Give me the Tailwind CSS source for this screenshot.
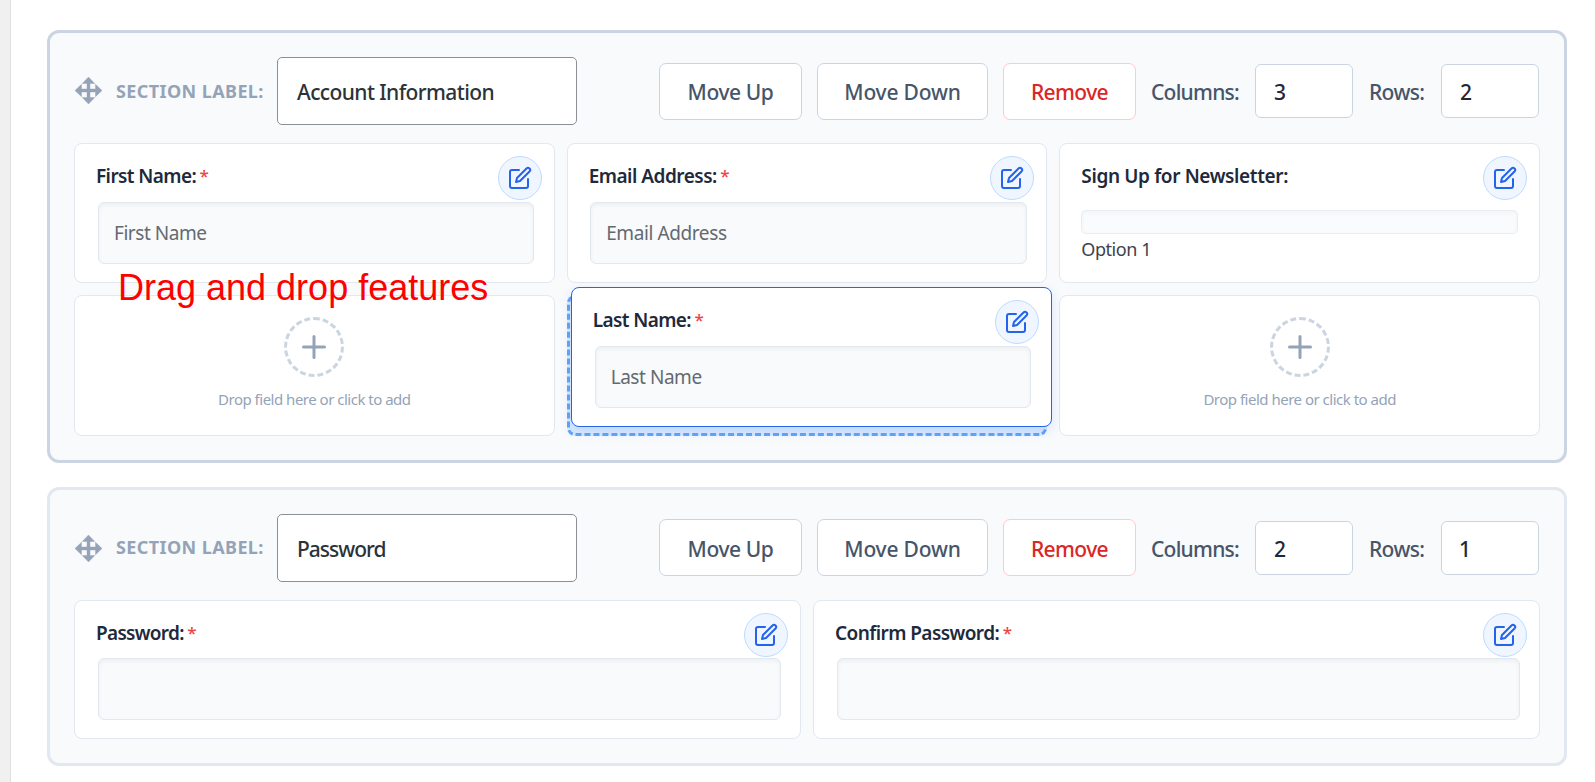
<!DOCTYPE html>
<html lang="en">
<head>
<meta charset="utf-8">
<title>Form builder</title>
<script src="https://cdn.jsdelivr.net/npm/@tailwindcss/browser@4"></script>
</head>
<body class="relative h-[782px] overflow-hidden bg-[#f0f0f1] font-['Noto_Sans','Open_Sans',sans-serif] text-[21px] font-medium text-[#1e293b]">
<svg class="hidden">
  <symbol id="edit" viewBox="0 0 24 24" fill="none" stroke="currentColor" stroke-width="2" stroke-linecap="round" stroke-linejoin="round"><path d="M11 4H4a2 2 0 0 0-2 2v14a2 2 0 0 0 2 2h14a2 2 0 0 0 2-2v-7"/><path d="M18.5 2.5a2.121 2.121 0 0 1 3 3L12 15l-4 1 1-4 9.5-9.5z"/></symbol>
  <symbol id="move" viewBox="0 0 27 27" fill="currentColor"><path d="M13.500 0L19.700 6.500H15V12H20.500V7.300L27 13.500L20.500 19.700V15H15V20.500H19.700L13.500 27L7.300 20.500H12V15H6.500V19.700L0 13.500L6.500 7.300V12H12V6.500H7.300Z" stroke="currentColor" stroke-width="0.400"/></symbol>
  <symbol id="plus" viewBox="0 0 24 24" fill="none" stroke="currentColor" stroke-width="3" stroke-linecap="round"><path d="M12 1.500V22.500M1.500 12H22.500"/></symbol>
</svg>

<main class="ml-[10px] flex h-full flex-col gap-6 border-l border-[#dedfe1] bg-white pt-[30px] pr-[28px] pl-[36px]">

  <section class="h-[433px] shrink-0 rounded-xl border-3 border-[#cbd5e1] bg-[#f8fafc] p-6">
    <header class="mb-[18px] flex h-[68px] items-center">
      <svg class="mb-px ml-[1px] h-[27px] w-[27px] text-[#94a3b8]"><use href="#move"/></svg>
      <span class="ml-[14px] w-[161px] text-[18px] font-bold tracking-[0.400px] whitespace-nowrap text-[#94a3b8]">SECTION LABEL:</span>
      <div class="flex h-[68px] w-[300px] items-center rounded-[5px] border border-[#8c8f94] bg-white pt-1 pl-[19px] tracking-[-0.600px] text-[#2c3338]">Account Information</div>
      <div class="mr-px ml-auto flex items-center gap-[15px] text-[#475569]">
        <button class="h-[57px] w-[143px] rounded-[7px] border border-[#cbd5e1] bg-white pt-1 font-medium tracking-[-0.4px]">Move Up</button>
        <button class="h-[57px] w-[171px] rounded-[7px] border border-[#cbd5e1] bg-white pt-1 font-medium tracking-[-0.2px]">Move Down</button>
        <button class="h-[57px] w-[133px] rounded-[7px] border border-[#fecaca] bg-white pt-1 font-medium tracking-[-0.6px] text-[#dc2626]">Remove</button>
        <label class="flex items-center"><span class="w-[104px] pt-1 tracking-[-0.75px]">Columns:</span><span class="flex h-[54px] w-[98px] items-center rounded-[6px] border border-[#cbd5e1] bg-white pt-1 pl-[18px] text-[#1e293b]">3</span></label>
        <label class="flex items-center"><span class="w-[73px] pt-1 pl-[1px] tracking-[-0.65px]">Rows:</span><span class="flex h-[54px] w-[98px] items-center rounded-[6px] border border-[#cbd5e1] bg-white pt-1 pl-[18px] text-[#1e293b]">2</span></label>
      </div>
    </header>

    <div class="grid grid-cols-3 grid-rows-[140px_141px] gap-3">
      <div class="relative rounded-lg border border-[#e2e8f0] bg-white px-[21px] pt-[21px]">
        <div class="h-[22px] text-[19px] leading-[22px] font-semibold tracking-[-0.6px]">First Name:<span class="ml-[3.500px] align-[1px] text-[17px] leading-none font-medium text-[#ef4444]">*</span></div>
        <div class="mt-[15px] ml-[2px] flex h-[62px] w-[436px] items-center rounded-[6px] border border-[#e2e8f0] bg-[#f8fafc] pl-[15px] text-[19px] font-normal tracking-[-0.45px] text-[#646970] shadow-[inset_0_2px_4px_rgba(0,0,0,0.05)]">First Name</div>
        <div class="absolute top-3 right-3 grid h-11 w-11 place-items-center rounded-full border border-[#bfdbfe] bg-[#eff6ff] text-[#2563eb]"><svg class="h-6 w-6"><use href="#edit"/></svg></div>
      </div>
      <div class="relative rounded-lg border border-[#e2e8f0] bg-white px-[21px] pt-[21px]">
        <div class="h-[22px] text-[19px] leading-[22px] font-semibold tracking-[-0.5px]">Email Address:<span class="ml-[3.500px] align-[1px] text-[17px] leading-none font-medium text-[#ef4444]">*</span></div>
        <div class="mt-[15px] ml-[1.500px] flex h-[62px] w-[437px] items-center rounded-[6px] border border-[#e2e8f0] bg-[#f8fafc] pl-[15px] text-[19px] font-normal tracking-[-0.4px] text-[#646970] shadow-[inset_0_2px_4px_rgba(0,0,0,0.05)]">Email Address</div>
        <div class="absolute top-3 right-3 grid h-11 w-11 place-items-center rounded-full border border-[#bfdbfe] bg-[#eff6ff] text-[#2563eb]"><svg class="h-6 w-6"><use href="#edit"/></svg></div>
      </div>
      <div class="relative rounded-lg border border-[#e2e8f0] bg-white px-[21px] pt-[21px]">
        <div class="h-[22px] text-[19px] leading-[22px] font-semibold tracking-[-0.37px]">Sign Up for Newsletter:</div>
        <div class="mt-[23px] h-6 rounded-[5px] border border-[#e2e8f0]/75 bg-[#f8fafc]/75 shadow-[inset_0_2px_4px_rgba(0,0,0,0.03)]"></div>
        <div class="mt-[3px] text-[18px] leading-6 font-normal tracking-[-0.45px] text-[#3c434a]">Option 1</div>
        <div class="absolute top-3 right-3 grid h-11 w-11 place-items-center rounded-full border border-[#bfdbfe] bg-[#eff6ff] text-[#2563eb]"><svg class="h-6 w-6"><use href="#edit"/></svg></div>
      </div>

      <div class="flex flex-col items-center rounded-lg border border-[#e2e8f0] bg-white pt-[21px]">
        <div class="grid h-[60px] w-[60px] place-items-center rounded-full border-3 border-dashed border-[#cbd5e1] text-[#94a3b8]"><svg class="h-6 w-6"><use href="#plus"/></svg></div>
        <div class="mt-[10px] text-[15px] leading-6 font-normal tracking-[-0.5px] text-[#94a3b8]">Drop field here or click to add</div>
      </div>
      <div class="relative rounded-lg border-3 border-dashed border-[#60a5fa] bg-[#dbeafe]">
        <div class="absolute top-[-11px] left-[1px] h-[140px] w-[481px] rounded-lg border border-[#2563eb] bg-white px-[21px] pt-[21px] shadow-[0_4px_12px_rgba(37,99,235,0.15)]">
          <div class="h-[22px] text-[19px] leading-[22px] font-semibold tracking-[-0.6px]">Last Name:<span class="ml-[3.500px] align-[1px] text-[17px] leading-none font-medium text-[#ef4444]">*</span></div>
          <div class="mt-[15px] ml-[2px] flex h-[62px] w-[436px] items-center rounded-[6px] border border-[#e2e8f0] bg-[#f8fafc] pl-[15px] text-[19px] font-normal tracking-[-0.45px] text-[#646970] shadow-[inset_0_2px_4px_rgba(0,0,0,0.05)]">Last Name</div>
          <div class="absolute top-3 right-3 grid h-11 w-11 place-items-center rounded-full border border-[#bfdbfe] bg-[#eff6ff] text-[#2563eb]"><svg class="h-6 w-6"><use href="#edit"/></svg></div>
        </div>
      </div>
      <div class="flex flex-col items-center rounded-lg border border-[#e2e8f0] bg-white pt-[21px]">
        <div class="grid h-[60px] w-[60px] place-items-center rounded-full border-3 border-dashed border-[#cbd5e1] text-[#94a3b8]"><svg class="h-6 w-6"><use href="#plus"/></svg></div>
        <div class="mt-[10px] text-[15px] leading-6 font-normal tracking-[-0.5px] text-[#94a3b8]">Drop field here or click to add</div>
      </div>
    </div>
  </section>

  <section class="h-[279px] shrink-0 rounded-xl border-3 border-[#e2e8f0] bg-[#f8fafc] p-6">
    <header class="mb-[18px] flex h-[68px] items-center">
      <svg class="ml-[1px] h-[27px] w-[27px] text-[#94a3b8]"><use href="#move"/></svg>
      <span class="ml-[14px] w-[161px] pb-0.5 text-[18px] font-bold tracking-[0.400px] whitespace-nowrap text-[#94a3b8]">SECTION LABEL:</span>
      <div class="flex h-[68px] w-[300px] items-center rounded-[5px] border border-[#8c8f94] bg-white pt-1 pl-[19px] tracking-[-1px] text-[#2c3338]">Password</div>
      <div class="mr-px ml-auto flex items-center gap-[15px] text-[#475569]">
        <button class="mb-px h-[57px] w-[143px] rounded-[7px] border border-[#cbd5e1] bg-white pt-[5px] font-medium tracking-[-0.4px]">Move Up</button>
        <button class="mb-px h-[57px] w-[171px] rounded-[7px] border border-[#cbd5e1] bg-white pt-[5px] font-medium tracking-[-0.2px]">Move Down</button>
        <button class="mb-px h-[57px] w-[133px] rounded-[7px] border border-[#fecaca] bg-white pt-[5px] font-medium tracking-[-0.6px] text-[#dc2626]">Remove</button>
        <label class="flex items-center"><span class="w-[104px] pt-1 tracking-[-0.75px]">Columns:</span><span class="flex h-[54px] w-[98px] items-center rounded-[6px] border border-[#cbd5e1] bg-white pt-1 pl-[18px] text-[#1e293b]">2</span></label>
        <label class="flex items-center"><span class="w-[73px] pt-1 pl-[1px] tracking-[-0.65px]">Rows:</span><span class="flex h-[54px] w-[98px] items-center rounded-[6px] border border-[#cbd5e1] bg-white pt-1 pl-[17px] text-[#1e293b]">1</span></label>
      </div>
    </header>

    <div class="grid h-[139px] grid-cols-2 gap-3">
      <div class="relative rounded-lg border border-[#e2e8f0] bg-white px-[21px] pt-[21px]">
        <div class="h-[22px] text-[19px] leading-[22px] font-semibold tracking-[-0.7px]">Password:<span class="ml-[3.500px] align-[1px] text-[17px] leading-none font-medium text-[#ef4444]">*</span></div>
        <div class="mt-[14px] ml-[2px] h-[62px] w-[683px] rounded-[6px] border border-[#e2e8f0] bg-[#f8fafc] shadow-[inset_0_2px_4px_rgba(0,0,0,0.05)]"></div>
        <div class="absolute top-3 right-3 grid h-11 w-11 place-items-center rounded-full border border-[#bfdbfe] bg-[#eff6ff] text-[#2563eb]"><svg class="h-6 w-6"><use href="#edit"/></svg></div>
      </div>
      <div class="relative rounded-lg border border-[#e2e8f0] bg-white px-[21px] pt-[21px]">
        <div class="h-[22px] text-[19px] leading-[22px] font-semibold tracking-[-0.57px]">Confirm Password:<span class="ml-[3.500px] align-[1px] text-[17px] leading-none font-medium text-[#ef4444]">*</span></div>
        <div class="mt-[14px] ml-[2px] h-[62px] w-[683px] rounded-[6px] border border-[#e2e8f0] bg-[#f8fafc] shadow-[inset_0_2px_4px_rgba(0,0,0,0.05)]"></div>
        <div class="absolute top-3 right-3 grid h-11 w-11 place-items-center rounded-full border border-[#bfdbfe] bg-[#eff6ff] text-[#2563eb]"><svg class="h-6 w-6"><use href="#edit"/></svg></div>
      </div>
    </div>
  </section>
</main>

<!-- Annotation over the canvas -->
<p class="absolute top-[267px] left-[118px] font-['Liberation_Sans',sans-serif] text-[36px] leading-[42px] font-normal whitespace-nowrap text-[#ff0000]">Drag and drop features</p>
</body>
</html>
